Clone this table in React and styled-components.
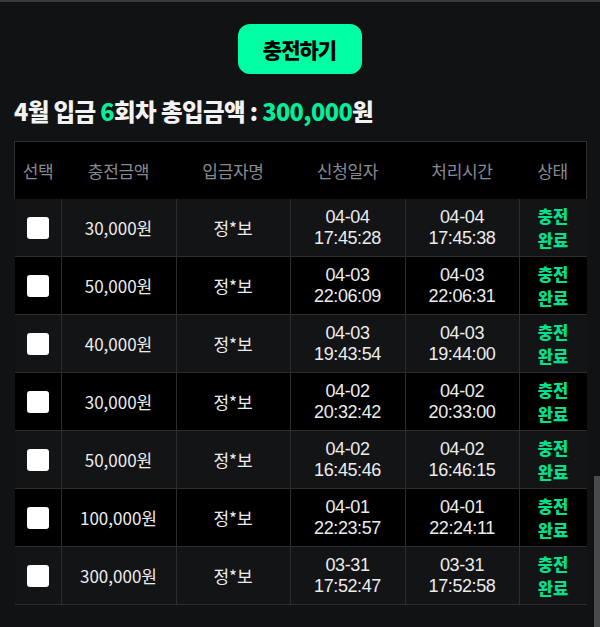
import React from 'react';
import styled, { createGlobalStyle } from 'styled-components';

const GlobalStyle = createGlobalStyle`
    html, body {
        margin: 0;
        padding: 0;
        background: #111214;
        font-family: "Noto Sans CJK KR", "Noto Sans", sans-serif;
    }
`;

const Page = styled.div`
    min-height: 627px;
    box-sizing: border-box;
    border-top: 2px solid #3a3b3d;
    padding: 22px 15px 20px 14px;
    display: flex;
    flex-direction: column;
`;

const ChargeButton = styled.button`
    align-self: center;
    width: 124px;
    height: 50px;
    border: none;
    border-radius: 12px;
    background: #00ffa3;
    color: #000;
    font-family: "Noto Sans CJK KR", sans-serif;
    font-size: 21px;
    font-weight: 900;
    letter-spacing: -1px;
    cursor: pointer;
`;

const Summary = styled.h2`
    margin: 21px 0 0;
    font-size: 23.5px;
    line-height: 32px;
    font-weight: 900;
    letter-spacing: -0.6px;
    color: #f2f2f2;
`;

const Green = styled.span`
    color: #00f09a;
`;

const Table = styled.table`
    margin-top: 14px;
    width: 571px;
    border-collapse: collapse;
    table-layout: fixed;
`;

const HeadCell = styled.th`
    width: ${({ $w }) => $w}px;
    height: 57px;
    padding: 0;
    background: #000;
    color: #868a94;
    font-size: 17px;
    font-weight: 400;
    letter-spacing: -0.3px;
    border-top: 1px solid #2e2f31;
    &:first-child { border-left: 1px solid #2e2f31; }
    &:last-child { border-right: 1px solid #2e2f31; }
`;

const Row = styled.tr`
    background: ${({ $odd }) => ($odd ? '#131416' : '#000')};
    border-bottom: 1px solid #2c2d30;
`;

const Cell = styled.td`
    height: 57px;
    padding: 0;
    text-align: center;
    color: #ececec;
    font-size: 17px;
    line-height: 20px;
    border-left: 1px solid #2c2d30;
    &:first-child { border-left: none; }
`;

const DateText = styled.div`
    font-family: "Liberation Sans", Arial, sans-serif;
    font-size: 18px;
    line-height: 21px;
    letter-spacing: -0.4px;
`;

const Status = styled.div`
    color: #00e28e;
    font-size: 16.5px;
    font-weight: 800;
    line-height: 24px;
`;

const Check = styled.span`
    display: inline-block;
    width: 22px;
    height: 22px;
    border-radius: 3px;
    background: #fff;
    vertical-align: middle;
`;

const ScrollThumb = styled.div`
    position: fixed;
    right: 0;
    top: 476px;
    width: 6px;
    height: 151px;
    background: #4a4b4d;
`;

const rows = [
    ['30,000원', '04-04', '17:45:28', '04-04', '17:45:38'],
    ['50,000원', '04-03', '22:06:09', '04-03', '22:06:31'],
    ['40,000원', '04-03', '19:43:54', '04-03', '19:44:00'],
    ['30,000원', '04-02', '20:32:42', '04-02', '20:33:00'],
    ['50,000원', '04-02', '16:45:46', '04-02', '16:46:15'],
    ['100,000원', '04-01', '22:23:57', '04-01', '22:24:11'],
    ['300,000원', '03-31', '17:52:47', '03-31', '17:52:58'],
];

const heads = [
    ['선택', 46],
    ['충전금액', 115],
    ['입금자명', 114],
    ['신청일자', 115],
    ['처리시간', 114],
    ['상태', 67],
];

const App = () => (
    <>
        <GlobalStyle />
        <Page>
            <ChargeButton>충전하기</ChargeButton>
            <Summary>
                4월 입금 <Green>6</Green>회차 총입금액 : <Green>300,000</Green>원
            </Summary>
            <Table>
                <thead>
                    <tr>
                        {heads.map(([t, w]) => (
                            <HeadCell key={t} $w={w}>{t}</HeadCell>
                        ))}
                    </tr>
                </thead>
                <tbody>
                    {rows.map((r, i) => (
                        <Row key={i} $odd={i % 2 === 0}>
                            <Cell><Check /></Cell>
                            <Cell>{r[0]}</Cell>
                            <Cell>정*보</Cell>
                            <Cell>
                                <DateText>{r[1]}<br />{r[2]}</DateText>
                            </Cell>
                            <Cell>
                                <DateText>{r[3]}<br />{r[4]}</DateText>
                            </Cell>
                            <Cell>
                                <Status>충전<br />완료</Status>
                            </Cell>
                        </Row>
                    ))}
                </tbody>
            </Table>
        </Page>
        <ScrollThumb />
    </>
);

export default App;
